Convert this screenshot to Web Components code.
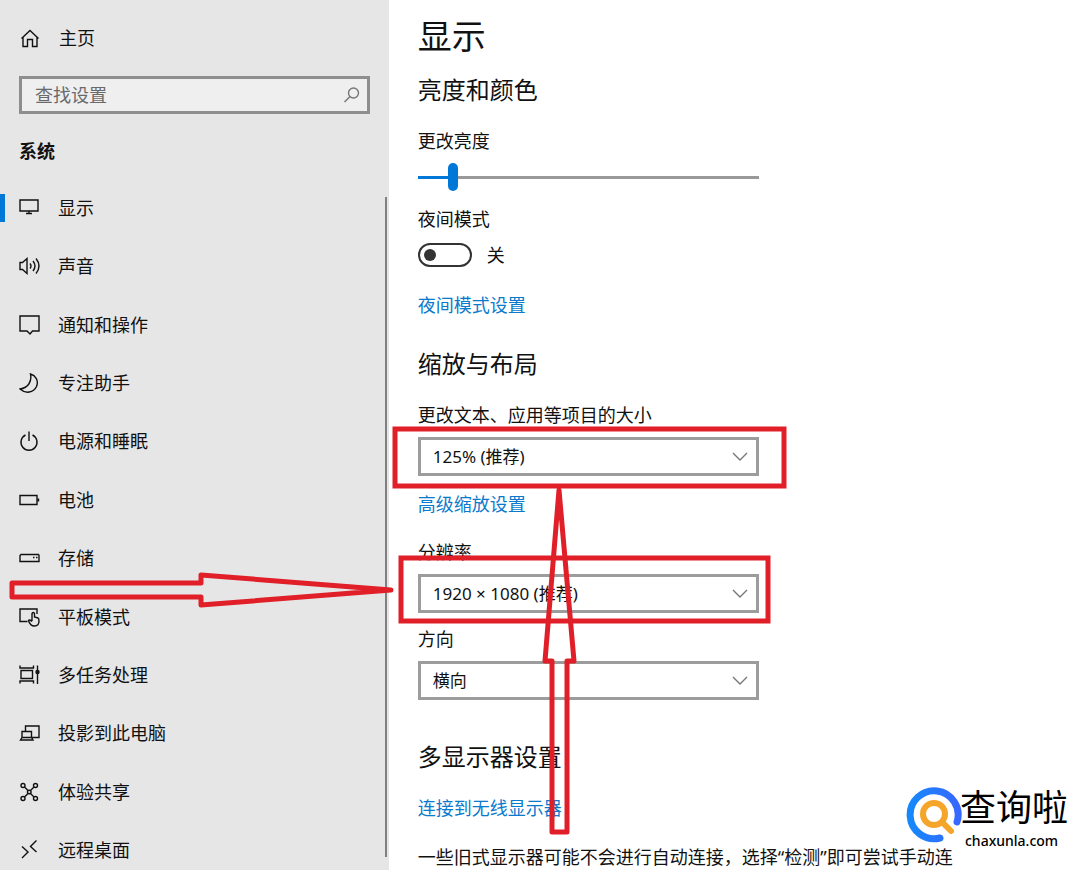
<!DOCTYPE html>
<html lang="zh-CN">
<head>
  <meta charset="UTF-8">
  <meta name="viewport" content="width=device-width, initial-scale=1.0">
  <title>设置</title>
  <style>
    body {
      margin: 0;
      background: #fff;
      color: #111;
      font: 18px/24px "Noto Sans", "Noto Sans CJK SC", sans-serif;
    }
  </style>
</head>
<body>
  <settings-app>
    <settings-sidebar slot="sidebar">
      <nav-item icon="display" selected>显示</nav-item>
      <nav-item icon="sound">声音</nav-item>
      <nav-item icon="message">通知和操作</nav-item>
      <nav-item icon="moon">专注助手</nav-item>
      <nav-item icon="power">电源和睡眠</nav-item>
      <nav-item icon="battery">电池</nav-item>
      <nav-item icon="storage">存储</nav-item>
      <nav-item icon="tablet">平板模式</nav-item>
      <nav-item icon="multitask">多任务处理</nav-item>
      <nav-item icon="project">投影到此电脑</nav-item>
      <nav-item icon="share">体验共享</nav-item>
      <nav-item icon="remote">远程桌面</nav-item>
    </settings-sidebar>

    <settings-section heading="亮度和颜色">
      <range-field label="更改亮度" value="9"></range-field>
      <toggle-field label="夜间模式"></toggle-field>
      <text-link>夜间模式设置</text-link>
    </settings-section>
    <settings-section heading="缩放与布局">
      <select-field label="更改文本、应用等项目的大小" value="125% (推荐)"></select-field>
      <text-link class="advanced">高级缩放设置</text-link>
      <select-field label="分辨率" value="1920 × 1080 (推荐)"></select-field>
      <select-field label="方向" value="横向"></select-field>
    </settings-section>
    <settings-section heading="多显示器设置">
      <text-link class="wireless">连接到无线显示器</text-link>
      <p>一些旧式显示器可能不会进行自动连接，选择“检测”即可尝试手动连</p>
    </settings-section>

    <red-marks slot="overlay"></red-marks>
    <site-mark slot="overlay"></site-mark>
  </settings-app>

  <script>
    const ICONS = {
      home: '<path d="M2.500 11.500 11 3.500l8.500 8M4 10.500v9h4.500v-7h5v7H18v-9"/>',
      search: '<circle cx="14.500" cy="9" r="5"/><path d="M11 12.500 5.500 18"/>',
      display: '<path d="M1 3h18v11H1zM10 14v2.500M7 16.500h6"/>',
      sound: '<path d="M1 7.500h2.500L8 3.500v15l-4.500-4H1zM11 8.500q2 2.500 0 5M14 6q4 5 0 10M17 3.500q6 7.500 0 15"/>',
      message: '<path d="M1 2h19v15h-6.500L11 20l-3-3H1z"/>',
      moon: '<path d="M11.500 2c1.500 7-2 14-10.500 15 5.500 5 13.500 4 16.500-2.500C20 8.500 16.500 3.500 11.500 2z"/>',
      power: '<path d="M6.500 5a8 8 0 1 0 7 0M10 1.500V11"/>',
      battery: '<path d="M1 6.500h17v9H1zM19.500 9.500v3"/>',
      storage: '<path d="M2 7.500h17.500l.5 1v6H1v-6z"/><path d="M14 10.500h1.500M17 10.500h1.500"/>',
      tablet: '<path d="M8.500 15.500H1V3h17v5"/><path d="M13 15V7.500q1.500-2 2.500 0V11l3.500 1q1 .5 1 3c0 3-1.500 5-4.500 5S10.500 18 9.500 14.500q1-1.500 3.500 1"/>',
      multitask: '<path d="M2 6.500h11.500v8H2zM1 1.500V4h13.500V1.500M1 19.500V17h13.500v2.500M18.500 1.500V20"/><circle cx="18.500" cy="8" r="1.500" fill="currentColor"/>',
      project: '<path d="M6.500 9V4H20v11.500h-7M3 9.500h9.500v6H3zM3 15.500l-1.500 2.500H14l-1.500-2.500"/>',
      share: '<circle cx="4" cy="4.500" r="2"/><circle cx="16.500" cy="4.500" r="2"/><circle cx="4" cy="17.500" r="2"/><circle cx="16.500" cy="17.500" r="2"/><circle cx="10.250" cy="11" r="1.800"/><path d="m5.500 6 3.500 3.500M15 6l-3.500 3.500M5.500 16 9 12.500M15 16l-3.500-3.500"/>',
      remote: '<path d="m3 7.500 6 5.500-6 6M17.500 1.500l-6 6 6 5.500"/>'
    };

    const icon = (name) => `
      <svg viewBox="0 0 22 22" width="22" height="22" fill="none" stroke="currentColor"
        stroke-width="1.4" aria-hidden="true">${ICONS[name]}</svg>`;

    class SettingsApp extends HTMLElement {
      connectedCallback() {
        this.attachShadow({ mode: 'open' });
        this.shadowRoot.innerHTML = `
          <style>
            :host {
              display: flex;
              position: relative;
              height: 100vh;
              overflow: hidden;
            }
            main {
              flex: 1;
              min-width: 0;
              box-sizing: border-box;
              padding: 13px 29px 0;
            }
            h1 {
              margin: 0 0 15px;
              font-size: 34px;
              line-height: 46px;
              font-weight: 400;
            }
          </style>
          <slot name="sidebar"></slot>
          <main>
            <h1>显示</h1>
            <slot></slot>
          </main>
          <slot name="overlay"></slot>
        `;
      }
    }
    customElements.define('settings-app', SettingsApp);

    class SettingsSidebar extends HTMLElement {
      connectedCallback() {
        this.attachShadow({ mode: 'open' });
        this.shadowRoot.innerHTML = `
          <style>
            :host {
              display: flex;
              flex-direction: column;
              position: relative;
              flex: 0 0 36%;
              background: #e6e6e6;
            }
            .home {
              display: flex;
              align-items: center;
              gap: 18px;
              margin: 26px 19px 0;
              color: inherit;
              text-decoration: none;
            }
            .search {
              display: flex;
              align-items: center;
              box-sizing: border-box;
              height: 38px;
              margin: 26px 19px 0;
              padding: 0 6px 0 13px;
              border: 3px solid #8e8e8e;
              background: #efefef;
              color: #767676;
            }
            input {
              flex: 1;
              min-width: 0;
              padding: 0;
              border: 0;
              outline: 0;
              background: none;
              font: inherit;
            }
            input::placeholder {
              color: #6a6a6a;
              opacity: 1;
            }
            h2 {
              margin: 25px 19px;
              font-size: 18px;
              line-height: 24px;
              font-weight: 700;
            }
            nav {
              display: flex;
              flex: 1;
              flex-direction: column;
              justify-content: space-between;
            }
            .thumb {
              position: absolute;
              top: 197px;
              right: 2px;
              bottom: 13px;
              width: 2px;
              background: #808080;
            }
          </style>
          <a class="home" href="#">${icon('home')}<span>主页</span></a>
          <label class="search">
            <input type="text" placeholder="查找设置" aria-label="查找设置">
            ${icon('search')}
          </label>
          <h2>系统</h2>
          <nav><slot></slot></nav>
          <div class="thumb"></div>
        `;
      }
    }
    customElements.define('settings-sidebar', SettingsSidebar);

    class NavItem extends HTMLElement {
      connectedCallback() {
        this.attachShadow({ mode: 'open' });
        this.shadowRoot.innerHTML = `
          <style>
            :host {
              display: block;
            }
            a {
              display: flex;
              align-items: center;
              gap: 17px;
              height: 40px;
              color: inherit;
              text-decoration: none;
            }
            a::before {
              content: "";
              width: 5px;
              height: 28px;
              margin-right: -3px;
            }
            :host([selected]) a::before {
              background: #0078d7;
            }
          </style>
          <a href="#">${icon(this.getAttribute('icon'))}<span><slot></slot></span></a>
        `;
      }
    }
    customElements.define('nav-item', NavItem);

    class SettingsSection extends HTMLElement {
      connectedCallback() {
        this.attachShadow({ mode: 'open' });
        this.shadowRoot.innerHTML = `
          <style>
            :host {
              display: block;
            }
            :host(:not(:last-of-type)) {
              margin-bottom: 31px;
            }
            :host(:last-of-type) {
              margin-top: 41px;
            }
            h2 {
              margin: 0 0 23px;
              font-size: 24px;
              line-height: 32px;
              font-weight: 400;
            }
            ::slotted(.advanced) {
              margin: 16px 0 24px;
            }
            ::slotted(.wireless) {
              margin-bottom: 25px;
            }
            ::slotted(p) {
              margin: 0;
              white-space: nowrap;
            }
          </style>
          <h2>${this.getAttribute('heading')}</h2>
          <slot></slot>
        `;
      }
    }
    customElements.define('settings-section', SettingsSection);

    class TextLink extends HTMLElement {
      connectedCallback() {
        this.attachShadow({ mode: 'open' });
        this.shadowRoot.innerHTML = `
          <style>
            :host {
              display: block;
            }
            a {
              color: #0a7acc;
              text-decoration: none;
            }
          </style>
          <a href="#"><slot></slot></a>
        `;
      }
    }
    customElements.define('text-link', TextLink);

    class RangeField extends HTMLElement {
      connectedCallback() {
        const value = this.getAttribute('value');
        this.attachShadow({ mode: 'open' });
        this.shadowRoot.innerHTML = `
          <style>
            :host {
              display: block;
              max-width: 341px;
              margin-bottom: 15px;
            }
            label {
              display: block;
              margin-bottom: 9px;
            }
            input {
              display: block;
              appearance: none;
              width: 100%;
              height: 30px;
              margin: 0;
              background: linear-gradient(to right, #0078d7 var(--value), #999 var(--value)) center / 100% 3px no-repeat;
            }
            input::-webkit-slider-thumb {
              appearance: none;
              width: 10px;
              height: 28px;
              border-radius: 5px;
              background: #0078d7;
            }
          </style>
          <label for="range">${this.getAttribute('label')}</label>
          <input id="range" type="range" min="0" max="100" value="${value}" style="--value: ${value}%">
        `;
        const input = this.shadowRoot.querySelector('input');
        input.addEventListener('input', () => input.style.setProperty('--value', `${input.value}%`));
      }
    }
    customElements.define('range-field', RangeField);

    class ToggleField extends HTMLElement {
      connectedCallback() {
        this.attachShadow({ mode: 'open' });
        this.shadowRoot.innerHTML = `
          <style>
            :host {
              display: block;
              margin-bottom: 26px;
            }
            label {
              display: block;
              margin-bottom: 12px;
            }
            .row {
              display: flex;
              align-items: center;
              gap: 15px;
            }
            input {
              display: flex;
              align-items: center;
              appearance: none;
              box-sizing: border-box;
              width: 54px;
              height: 24px;
              margin: 0;
              padding: 0 4px;
              border: 2px solid #333;
              border-radius: 12px;
            }
            input::before {
              content: "";
              width: 12px;
              height: 12px;
              border-radius: 50%;
              background: #333;
            }
            input:checked {
              justify-content: flex-end;
            }
          </style>
          <label for="toggle">${this.getAttribute('label')}</label>
          <div class="row">
            <input id="toggle" type="checkbox" role="switch">
            <span>关</span>
          </div>
        `;
        const input = this.shadowRoot.querySelector('input');
        const state = this.shadowRoot.querySelector('span');
        input.addEventListener('change', () => {
          state.textContent = input.checked ? '开' : '关';
        });
      }
    }
    customElements.define('toggle-field', ToggleField);

    class SelectField extends HTMLElement {
      connectedCallback() {
        this.attachShadow({ mode: 'open' });
        this.shadowRoot.innerHTML = `
          <style>
            :host {
              display: block;
              max-width: 341px;
            }
            :host(:last-child) {
              margin-top: 14px;
            }
            label {
              display: block;
              margin-bottom: 10px;
            }
            .box {
              display: grid;
              align-items: center;
            }
            select, svg {
              grid-area: 1 / 1;
            }
            select {
              appearance: none;
              box-sizing: border-box;
              width: 100%;
              height: 39px;
              padding: 0 36px 0 12px;
              border: 3px solid #9c9c9c;
              border-radius: 0;
              background: #fff;
              color: inherit;
              font: inherit;
              font-size: 17px;
            }
            svg {
              justify-self: end;
              margin-right: 11px;
              pointer-events: none;
            }
          </style>
          <label for="select">${this.getAttribute('label')}</label>
          <div class="box">
            <select id="select"><option>${this.getAttribute('value')}</option></select>
            <svg viewBox="0 0 16 10" width="16" height="10" fill="none" stroke="#777" stroke-width="1.4"
              aria-hidden="true"><path d="m1 1 7 7 7-7"/></svg>
          </div>
        `;
      }
    }
    customElements.define('select-field', SelectField);

    // hand-drawn boxes and arrows over the page
    class RedMarks extends HTMLElement {
      connectedCallback() {
        this.attachShadow({ mode: 'open' });
        this.shadowRoot.innerHTML = `
          <style>
            :host {
              display: block;
              position: absolute;
              inset: 0;
              pointer-events: none;
            }
            svg {
              display: block;
              width: 100%;
              height: 100%;
            }
          </style>
          <svg viewBox="0 0 1080 870" preserveAspectRatio="xMinYMin" fill="none" stroke="#e01f29"
            stroke-width="5" aria-hidden="true">
            <rect x="395" y="429" width="389" height="57"/>
            <rect x="401" y="558" width="367" height="63"/>
            <g stroke-linejoin="round">
              <path d="M12 583H201V575L391 590 201 605V597H12Z"/>
              <path d="M552 832V661H545L559 490 574 661H567V832Z"/>
            </g>
          </svg>
        `;
      }
    }
    customElements.define('red-marks', RedMarks);

    class SiteMark extends HTMLElement {
      connectedCallback() {
        this.attachShadow({ mode: 'open' });
        this.shadowRoot.innerHTML = `
          <style>
            :host {
              display: flex;
              align-items: flex-start;
              position: absolute;
              right: 12px;
              bottom: 21px;
              color: #000;
            }
            svg {
              margin-top: 4px;
            }
            .text {
              display: flex;
              flex-direction: column;
              margin-left: -2px;
            }
            strong {
              font-size: 36px;
              line-height: 50px;
              font-weight: 400;
            }
            small {
              padding-left: 5px;
              font-size: 14px;
              line-height: 16px;
              font-weight: 500;
            }
          </style>
          <svg viewBox="0 0 56 56" width="56" height="56" fill="none" stroke-linecap="round" aria-hidden="true">
            <defs>
              <linearGradient id="ring">
                <stop stop-color="#1688fb"/>
                <stop offset="1" stop-color="#3768ff"/>
              </linearGradient>
            </defs>
            <path d="M51 35A24 24 0 1 0 34 51" stroke="url(#ring)" stroke-width="7"/>
            <circle cx="28" cy="27" r="11" stroke="#f5a52a" stroke-width="6"/>
            <path d="m36 35 9 9" stroke="#f5a52a" stroke-width="6"/>
          </svg>
          <div class="text">
            <strong>查询啦</strong>
            <small>chaxunla.com</small>
          </div>
        `;
      }
    }
    customElements.define('site-mark', SiteMark);
  </script>
</body>
</html>
